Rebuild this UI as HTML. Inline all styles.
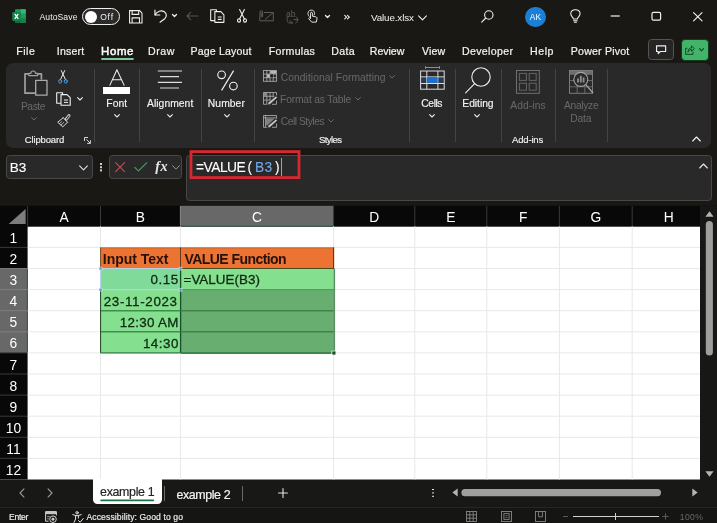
<!DOCTYPE html>
<html>
<head>
<meta charset="utf-8">
<title>Value.xlsx - Excel</title>
<style>
html,body{margin:0;padding:0;}
body{width:717px;height:523px;overflow:hidden;background:#1a1815;font-family:"Liberation Sans",sans-serif;color:#fff;position:relative;}
.a{position:absolute;}
.t{position:absolute;white-space:nowrap;line-height:1;transform-origin:0 50%;}
#root{position:absolute;left:0;top:0;width:717px;height:523px;will-change:transform;}
svg{position:absolute;overflow:visible;}
/* title */
#title{left:0;top:0;width:717px;height:36px;background:#1a1815;}
/* tabs */
.tab{font-size:10.6px;color:#f4f4f4;top:45px;-webkit-text-stroke:0.2px currentColor;}
/* ribbon */
#ribbon{left:6px;top:63px;width:705px;height:84.5px;background:#292929;border-radius:7px;}
.sep{position:absolute;width:1px;background:#444;top:69px;height:73px;}
.rl{font-size:10.3px;color:#f4f4f4;-webkit-text-stroke:0.15px currentColor;}
.gl{font-size:9.5px;color:#f2f2f2;top:134px;-webkit-text-stroke:0.15px currentColor;}
.dim{color:#696969;-webkit-text-stroke:0;}
/* formula bar */
#namebox{left:5.7px;top:155px;width:85.4px;height:21.7px;background:#292929;border:1px solid #484848;border-radius:3.5px;}
#fxbox{left:109.3px;top:155.2px;width:70.6px;height:21.4px;background:#292929;border:1px solid #484848;border-radius:3.5px;}
#fbar{left:185.5px;top:154.7px;width:524.5px;height:44.3px;background:#292929;border:1px solid #484848;border-radius:3.5px;}
/* grid */
.ch{position:absolute;top:206px;height:20px;color:#fff;font-size:13.8px;text-align:center;line-height:24px;}
.rh{position:absolute;left:0;width:26.8px;color:#fff;font-size:13.8px;text-align:center;line-height:1;}
.cell{position:absolute;-webkit-text-stroke:0.3px currentColor;font-size:13.4px;color:#1a1a1a;line-height:21px;white-space:nowrap;}
</style>
</head>
<body>
<div id="root">
<!-- TITLE BAR -->
<div class="a" id="title"></div>
<!--TITLE-CONTENT-->
<!-- excel logo -->
<svg style="left:12.3px;top:9.3px" width="14" height="14" viewBox="0 0 14 14">
 <rect x="3" y="0.3" width="10.8" height="13.5" rx="0.8" fill="#1f9a5c"/>
 <rect x="8.6" y="0.3" width="5.2" height="4.5" fill="#30b877"/>
 <rect x="8.6" y="4.8" width="5.2" height="4.5" fill="#1f9a5c"/>
 <rect x="8.6" y="9.3" width="5.2" height="4.5" fill="#14804a"/>
 <rect x="3" y="9.3" width="5.6" height="4.5" fill="#17653a"/>
 <rect x="0.2" y="2.9" width="8.6" height="9" rx="0.8" fill="#15804a"/>
 <path d="M2.7 4.9 L6.3 9.9 M6.3 4.9 L2.7 9.9" stroke="#fff" stroke-width="1.25" fill="none"/>
</svg>
<div class="t" id="t_autosave" style="left:39.46px;top:12.5px;font-size:8.6px;color:#f2f2f2;letter-spacing:0.1px">AutoSave</div>
<div class="a" style="left:81.5px;top:8px;width:36px;height:15px;border:1px solid #f0f0f0;border-radius:9px;background:#2b2b2b"></div>
<div class="a" style="left:84.5px;top:10.5px;width:12px;height:12px;border-radius:6px;background:#fff"></div>
<div class="t" id="t_off" style="left:100.17px;top:12.5px;font-size:8.6px;color:#f2f2f2;letter-spacing:0.78px">Off</div>
<!-- save -->
<svg style="left:129px;top:9.6px" width="13.6" height="13.6" viewBox="0 0 14 13" preserveAspectRatio="none" fill="none" stroke="#f0f0f0" stroke-width="1.1">
 <path d="M0.6 0.6 H11 L13.4 3 V12.4 H0.6 Z"/>
 <path d="M3.2 0.6 V4.2 H10 V0.6"/>
 <path d="M3.2 12.4 V7.6 H10.8 V12.4"/>
</svg>
<!-- undo -->
<svg style="left:153.6px;top:8.8px" width="13.6" height="14" viewBox="0 0 14 14" fill="none" stroke="#f0f0f0" stroke-width="1.2" stroke-linecap="round" stroke-linejoin="round">
 <path d="M1 1 V6 H6"/>
 <path d="M1.2 5.8 C3 2.2 7.5 0.6 10.6 2.6 C13.4 4.5 13.2 7.8 11 9.8 L6.2 13.4"/>
</svg>
<svg style="left:172px;top:14.4px" width="5" height="3.4" viewBox="0 0 6 4" fill="none" stroke="#f0f0f0" stroke-width="1.5" stroke-linecap="round" stroke-linejoin="round"><path d="M0.6 0.6 L3 3 L5.4 0.6"/></svg>
<!-- redo-ish left arrow (dim) -->
<svg style="left:186.2px;top:10.7px" width="13" height="10" viewBox="0 0 14 10" fill="none" stroke="#525252" stroke-width="1.2" stroke-linecap="round" stroke-linejoin="round"><path d="M13 5 H1 M5 1 L1 5 L5 9"/></svg>
<!-- copy -->
<svg style="left:210px;top:9.1px" width="14.6" height="14" viewBox="0 0 15 13" preserveAspectRatio="none" fill="none" stroke="#f0f0f0" stroke-width="1.1" stroke-linejoin="round">
 <path d="M5 10.8 H0.7 V0.7 H6.6 V2.4"/>
 <path d="M5 2.4 H11.2 L14.3 5.4 V12.4 H5 Z"/>
 <path d="M8 7.4 H12 M8 9.6 H12" stroke-width="1"/>
</svg>
<!-- scissors -->
<svg style="left:237px;top:9.4px" width="10" height="14" viewBox="0 0 10 14" fill="none" stroke="#f0f0f0" stroke-width="1.1" stroke-linecap="round">
 <path d="M2.6 0.6 L7.4 10 M7.4 0.6 L2.6 10"/>
 <ellipse cx="2" cy="11.4" rx="1.5" ry="1.7"/><ellipse cx="8" cy="11.4" rx="1.5" ry="1.7"/>
</svg>
<!-- dim mail -->
<svg style="left:259px;top:10px" width="15" height="12" viewBox="0 0 15 12" fill="none" stroke="#5c5c5c" stroke-width="1">
 <path d="M5 2.5 H14.3 V10.8 H0.7 V7"/>
 <path d="M14 2.8 L6 9.5"/>
 <path d="M1 7 V2 C1 0.2 3.6 0.2 3.6 2 V6.4 C3.6 7.4 2.2 7.4 2.2 6.4 V2.6"/>
</svg>
<!-- dim ab -->
<div class="t" style="left:286px;top:9.5px;font-size:8.5px;color:#5c5c5c">ab</div>
<svg style="left:286px;top:16px" width="13" height="8" viewBox="0 0 13 8" fill="none" stroke="#5c5c5c" stroke-width="1" stroke-linecap="round">
 <path d="M2.5 0.5 C0.5 2 0.5 5 2.5 6.8 M6.5 7 L3.8 4.6 M6.5 7 H3.4 M8 3.6 H12 M10 0.8 C12.5 2.4 12.2 5.6 9.8 7"/>
</svg>
<!-- touch -->
<svg style="left:307px;top:8.8px" width="11" height="14.4" viewBox="0 0 13 16" fill="none" stroke="#f0f0f0" stroke-width="1.1" stroke-linecap="round" stroke-linejoin="round">
 <path d="M2.4 8.2 C-0.2 5.6 1.2 0.8 5 0.8 C8.6 0.8 10 4.4 8.4 6.6"/>
 <path d="M4.2 10.4 V4.4 C4.2 3 6.4 3 6.4 4.4 V8 L10.4 8.8 C11.6 9 12 9.8 11.8 11 L11 15 H5.6 L2.2 11.2 C1.6 10.2 3 9.2 4.2 10.4"/>
</svg>
<svg style="left:325px;top:14.8px" width="5" height="3.4" viewBox="0 0 6 4" fill="none" stroke="#f0f0f0" stroke-width="1.5" stroke-linecap="round" stroke-linejoin="round"><path d="M0.6 0.6 L3 3 L5.4 0.6"/></svg>
<svg style="left:343.6px;top:14.9px" width="6.4" height="4.3" viewBox="0 0 7 5" fill="none" stroke="#f0f0f0" stroke-width="1.3" stroke-linecap="round" stroke-linejoin="round"><path d="M0.6 0.5 L2.8 2.5 L0.6 4.5 M3.8 0.5 L6 2.5 L3.8 4.5"/></svg>
<div class="t" id="t_fname" style="left:370.98px;top:12.95px;font-size:9.8px;color:#f2f2f2;letter-spacing:-0.11px">Value.xlsx</div>
<svg style="left:417.5px;top:14.5px" width="9" height="6" viewBox="0 0 9 6" fill="none" stroke="#f0f0f0" stroke-width="1.1" stroke-linecap="round" stroke-linejoin="round"><path d="M0.6 0.8 L4.5 4.8 L8.4 0.8"/></svg>
<!-- search -->
<svg style="left:480.8px;top:9.6px" width="13" height="13" viewBox="0 0 13 13" fill="none" stroke="#f0f0f0" stroke-width="1.1" stroke-linecap="round"><circle cx="7.8" cy="5" r="4.2"/><path d="M4.8 8 L0.7 12.2"/></svg>
<!-- avatar -->
<div class="a" style="left:525px;top:6.5px;width:20.5px;height:20.5px;border-radius:11px;background:#1b7fd6"></div>
<div class="t" id="t_ak" style="left:529.8px;top:13.4px;font-size:8.4px;color:#fff">AK</div>
<!-- bulb -->
<svg style="left:569.7px;top:8.9px" width="11.4" height="14.3" viewBox="0 0 12 15" fill="none" stroke="#f0f0f0" stroke-width="1.1" stroke-linecap="round" stroke-linejoin="round">
 <path d="M3.6 10.6 C3.4 8.6 0.8 7.6 0.8 5 C0.8 2.4 3 0.7 5.7 0.7 C8.4 0.7 10.6 2.4 10.6 5 C10.6 7.6 8 8.6 7.8 10.6 Z"/>
 <path d="M3.8 12.4 H7.6 M4.6 14 H6.8"/>
</svg>
<!-- window controls -->
<svg style="left:0;top:0" width="717" height="36" viewBox="0 0 717 36"><rect x="610.6" y="15.2" width="9.3" height="1.5" rx="0.6" fill="#c6c6c6"/><rect x="652" y="12.4" width="8.6" height="7.8" rx="1.4" fill="none" stroke="#f0f0f0" stroke-width="1.2"/></svg>
<svg style="left:692.8px;top:11.9px" width="9.6" height="9.4" viewBox="0 0 10 10" preserveAspectRatio="none" fill="none" stroke="#f0f0f0" stroke-width="1.2" stroke-linecap="round"><path d="M0.6 0.6 L9.4 9.4 M9.4 0.6 L0.6 9.4"/></svg>
<!--TITLE-END-->
<!--TABS-->
<!-- tabs -->
<div class="t tab" id="tb_file" style="top:45.8px;left:16.33px;letter-spacing:0.47px">File</div>
<div class="t tab" id="tb_insert" style="top:45.8px;left:56.72px;letter-spacing:0.22px">Insert</div>
<div class="t tab" id="tb_home" style="top:45.8px;left:100.78px;color:#fff;letter-spacing:0.59px;-webkit-text-stroke:0.45px #fff;transform:scaleX(1.08)">Home</div>
<svg style="left:0;top:0" width="200" height="70" viewBox="0 0 200 70"><rect x="101" y="57.9" width="32.9" height="2.1" rx="1" fill="#7cc79c"/></svg>
<div class="t tab" id="tb_draw" style="top:45.8px;left:148.12px;letter-spacing:0.52px">Draw</div>
<div class="t tab" id="tb_pl" style="top:45.8px;left:190.59px;letter-spacing:0.14px">Page Layout</div>
<div class="t tab" id="tb_formulas" style="top:45.8px;left:268.86px;letter-spacing:0.27px">Formulas</div>
<div class="t tab" id="tb_data" style="top:45.8px;left:331.29px;letter-spacing:0.29px">Data</div>
<div class="t tab" id="tb_review" style="top:45.8px;left:369.81px;letter-spacing:-0.03px">Review</div>
<div class="t tab" id="tb_view" style="top:45.8px;left:422px;letter-spacing:0.13px">View</div>
<div class="t tab" id="tb_dev" style="top:45.8px;left:461.92px;letter-spacing:0.36px">Developer</div>
<div class="t tab" id="tb_help" style="top:45.8px;left:530.12px;letter-spacing:0.53px">Help</div>
<div class="t tab" id="tb_pp" style="top:45.8px;left:570.81px;letter-spacing:0.19px">Power Pivot</div>
<!-- comments button -->
<div class="a" style="left:648.3px;top:39.1px;width:23.6px;height:18.8px;border:1px solid #545454;border-radius:3.5px;background:#252525"></div>
<svg style="left:655.8px;top:44.5px" width="10.2" height="10" viewBox="0 0 11 10" fill="none" stroke="#f0f0f0" stroke-width="1.25" stroke-linejoin="round"><path d="M0.6 0.6 H10.4 V6.6 H4.6 L2.4 8.8 V6.6 H0.6 Z"/></svg>
<!-- share button -->
<div class="a" style="left:680.5px;top:38.7px;width:26.2px;height:20.4px;border-radius:4px;background:#43b369;border:0.8px solid #0f3d20"></div>
<svg style="left:684.6px;top:45px" width="10" height="10" viewBox="0 0 11 11" fill="none" stroke="#0f4a24" stroke-width="1.1" stroke-linejoin="round" stroke-linecap="round">
 <path d="M2.2 3.6 H0.7 V10.3 H8.8 V7.8"/>
 <path d="M3.4 7.6 C3.4 4.6 5.2 3.2 7.2 3.1 V1 L10.3 4 L7.2 6.8 V5 C5.6 5 4.4 5.8 3.4 7.6 Z"/>
</svg>
<svg style="left:699px;top:48px" width="5" height="4" viewBox="0 0 5 4" fill="none" stroke="#0f4a24" stroke-width="1.1" stroke-linecap="round" stroke-linejoin="round"><path d="M0.5 0.6 L2.5 2.8 L4.5 0.6"/></svg>
<!--TABS-END-->
<!-- RIBBON -->
<div class="a" id="ribbon"></div>
<!--RIBBON-CONTENT-->
<!-- Clipboard group -->
<svg style="left:24px;top:70px" width="24" height="26" viewBox="0 0 24 26" fill="none" stroke="#a0a0a0" stroke-width="1.7" stroke-linejoin="round">
 <path d="M11 23.2 H1 V3.8 H5"/>
 <path d="M13.4 3.8 H17.4 V9.6"/>
 <path d="M4.8 5.6 V3.4 H6.8 C7 0.2 11.4 0.2 11.6 3.4 H13.6 V5.6 Z" stroke-width="1.2"/>
 <rect x="11.7" y="10.3" width="11.3" height="14.9" fill="#292929" stroke-width="1.3" stroke="#ababab"/>
</svg>
<div class="t rl dim" id="r_paste" style="left:20.96px;top:101.6px;letter-spacing:-0.46px">Paste</div>
<svg style="left:30.5px;top:117px" width="6" height="4" viewBox="0 0 6 4" fill="none" stroke="#6a6a6a" stroke-width="1" stroke-linecap="round" stroke-linejoin="round"><path d="M0.6 0.6 L3 3 L5.4 0.6"/></svg>
<!-- cut -->
<svg style="left:58px;top:69.5px" width="10" height="14" viewBox="0 0 10 14" fill="none" stroke-width="1" stroke-linecap="round">
 <path d="M3.3 0.6 L7.7 10 M6.7 0.6 L2.3 10" stroke="#ececec"/>
 <ellipse cx="2.2" cy="11.3" rx="1.5" ry="1.9" stroke="#4a9be0"/><ellipse cx="7.8" cy="11.3" rx="1.5" ry="1.9" stroke="#4a9be0"/>
</svg>
<!-- copy -->
<svg style="left:56px;top:91.5px" width="15" height="14" viewBox="0 0 15 14" fill="none" stroke="#f0f0f0" stroke-width="1.1" stroke-linejoin="round">
 <path d="M5 11.2 H0.7 V0.7 H6.6 V2.6"/>
 <path d="M5 2.6 H11 L14.2 5.6 V13.2 H5 Z"/>
 <path d="M8 8 H12 M8 10.4 H12" stroke-width="1"/>
</svg>
<svg style="left:76.5px;top:96.5px" width="6" height="4" viewBox="0 0 6 4" fill="none" stroke="#e8e8e8" stroke-width="1.1" stroke-linecap="round" stroke-linejoin="round"><path d="M0.6 0.6 L3 3 L5.4 0.6"/></svg>
<!-- format painter -->
<svg style="left:57px;top:113.5px" width="14" height="14" viewBox="0 0 14 14" fill="none" stroke="#dedede" stroke-width="0.95" stroke-linejoin="round" stroke-linecap="round">
 <path d="M9.2 5.2 L12 1.6" stroke-width="3"/><path d="M9.4 5 L11.9 1.8" stroke="#292929" stroke-width="1.2"/>
 <path d="M6.2 3.6 L10.6 8.4"/>
 <path d="M6.2 3.8 L0.7 8.2 L5.8 12.8 L10.4 8.4"/>
 <path d="M2.6 9.6 L4.6 7.6 M4 11 L6.6 8.6" stroke-width="0.75"/>
</svg>
<div class="t gl" id="g_clip" style="top:135.37px;left:24.84px;letter-spacing:-0.16px">Clipboard</div>
<svg style="left:83.5px;top:136.5px" width="7" height="7" viewBox="0 0 7 7" fill="none" stroke="#e8e8e8" stroke-width="0.9"><path d="M0.5 4 V0.5 H4"/><path d="M2.4 2.4 L6.2 6.2 M6.4 3.2 V6.4 H3.2"/></svg>
<div class="sep" style="left:93.5px"></div>
<!-- Font group -->
<svg style="left:109px;top:68.5px" width="16" height="17" viewBox="0 0 16 17" fill="none" stroke="#f0f0f0" stroke-width="1.05" stroke-linejoin="round"><path d="M0.7 16.6 L7.9 0.8 L15.3 16.6 M3.4 10.8 H12.6"/></svg>
<div class="a" style="left:103px;top:87.2px;width:27.2px;height:6.6px;background:#fff"></div>
<div class="t rl" id="r_font" style="left:106.34px;top:98.87px;letter-spacing:0.02px">Font</div>
<svg style="left:113.5px;top:114px" width="6" height="4" viewBox="0 0 6 4" fill="none" stroke="#e8e8e8" stroke-width="1.1" stroke-linecap="round" stroke-linejoin="round"><path d="M0.6 0.6 L3 3 L5.4 0.6"/></svg>
<div class="sep" style="left:139px"></div>
<!-- Alignment -->
<svg style="left:157px;top:70px" width="26" height="19" viewBox="0 0 26 19" fill="none" stroke="#dcdcdc" stroke-width="1.1"><path d="M0.8 1 H25 M3 6.6 H22 M0.8 12.4 H25 M3 18 H22"/></svg>
<div class="t rl" id="r_align" style="left:147px;top:98.98px;letter-spacing:0.06px">Alignment</div>
<svg style="left:166.5px;top:114px" width="6" height="4" viewBox="0 0 6 4" fill="none" stroke="#e8e8e8" stroke-width="1.1" stroke-linecap="round" stroke-linejoin="round"><path d="M0.6 0.6 L3 3 L5.4 0.6"/></svg>
<div class="sep" style="left:201px"></div>
<!-- Number -->
<svg style="left:216.5px;top:69.5px" width="21" height="21" viewBox="0 0 21 21" fill="none" stroke="#f0f0f0" stroke-width="1.15"><circle cx="4.6" cy="4.8" r="3.8"/><circle cx="16.4" cy="16" r="3.8"/><path d="M16.6 0.6 L4.6 20.4"/></svg>
<div class="t rl" id="r_number" style="left:207.8px;top:98.83px;letter-spacing:0.09px">Number</div>
<svg style="left:223.5px;top:114px" width="6" height="4" viewBox="0 0 6 4" fill="none" stroke="#e8e8e8" stroke-width="1.1" stroke-linecap="round" stroke-linejoin="round"><path d="M0.6 0.6 L3 3 L5.4 0.6"/></svg>
<div class="sep" style="left:253.5px"></div>
<!-- Styles group -->
<svg style="left:263px;top:70.3px" width="14" height="12" viewBox="0 0 14 12" fill="none" stroke="#a6a6a6" stroke-width="0.9">
 <rect x="0.5" y="0.5" width="13" height="10.8"/><path d="M0.5 4.1 H13.5 M0.5 7.7 H13.5 M3.8 0.5 V11.3 M7 0.5 V11.3 M10.2 0.5 V11.3"/>
 <rect x="7.3" y="0.9" width="5.8" height="2.8" fill="#b8b8b8" stroke="none"/><rect x="4" y="4.3" width="3" height="3.2" fill="#b8b8b8" stroke="none"/><rect x="7.3" y="4.4" width="2.8" height="3" fill="#1e1e1e" stroke="none"/>
</svg>
<div class="t rl dim" id="r_cf" style="left:280.72px;top:72.95px;letter-spacing:0.06px">Conditional Formatting</div>
<svg style="left:388.5px;top:74.5px" width="6" height="4" viewBox="0 0 6 4" fill="none" stroke="#6a6a6a" stroke-width="1" stroke-linecap="round" stroke-linejoin="round"><path d="M0.6 0.6 L3 3 L5.4 0.6"/></svg>
<svg style="left:263px;top:92.3px" width="15" height="13" viewBox="0 0 15 13" fill="none" stroke="#a6a6a6" stroke-width="0.9">
 <path d="M0.5 12.3 V0.5 H13.5 V3.4 M0.5 4.3 H11.4 M0.5 8.1 H7.4 M3.8 0.5 V12.3 M7 0.5 V9 M10.2 0.5 V5.6 M0.5 12.3 H3.8 M9 12.3 H13.5 V8.6"/>
 <rect x="0.9" y="0.9" width="2.6" height="3" fill="#8a8a8a" stroke="none"/>
 <path d="M12.9 4.2 L14.3 5.6 L7 12.2 L4.6 12.8 L5.4 10.6 Z" fill="#d0d0d0" stroke="#2a2a2a" stroke-width="0.5"/>
</svg>
<div class="t rl dim" id="r_ft" style="left:280.06px;top:95.33px;letter-spacing:-0.18px">Format as Table</div>
<svg style="left:354.5px;top:96.5px" width="6" height="4" viewBox="0 0 6 4" fill="none" stroke="#6a6a6a" stroke-width="1" stroke-linecap="round" stroke-linejoin="round"><path d="M0.6 0.6 L3 3 L5.4 0.6"/></svg>
<svg style="left:263px;top:114.6px" width="15" height="13" viewBox="0 0 15 13" fill="none" stroke="#a6a6a6" stroke-width="0.9">
 <path d="M0.5 12.3 V0.5 H13.5 V3.4 M0.5 2.9 H13.5 M2.6 0.5 V12.3 M0.5 12.3 H3.8 M9 12.3 H13.5 V8.6"/>
 <path d="M3 3.4 H11.6 L4.6 10.2 L3 10.2 Z" fill="#808080" stroke="none"/>
 <path d="M12.9 4.2 L14.3 5.6 L7 12.2 L4.6 12.8 L5.4 10.6 Z" fill="#d0d0d0" stroke="#2a2a2a" stroke-width="0.5"/>
</svg>
<div class="t rl dim" id="r_cs" style="left:280.72px;top:117.07px;letter-spacing:-0.48px">Cell Styles</div>
<svg style="left:327.5px;top:119px" width="6" height="4" viewBox="0 0 6 4" fill="none" stroke="#6a6a6a" stroke-width="1" stroke-linecap="round" stroke-linejoin="round"><path d="M0.6 0.6 L3 3 L5.4 0.6"/></svg>
<div class="t gl" id="g_styles" style="top:135.17px;left:318.91px;letter-spacing:-0.56px">Styles</div>
<div class="sep" style="left:409px"></div>
<!-- Cells -->
<svg style="left:419.5px;top:66.3px" width="25" height="24" viewBox="0 0 25 24" fill="none" stroke="#dcdcdc" stroke-width="1">
 <path d="M5.5 1.5 H19.5 M5.5 0.2 V2.8 M19.5 0.2 V2.8" stroke="#5f9bd0"/>
 <rect x="0.6" y="5" width="23.6" height="18.2"/>
 <path d="M0.6 10.9 H24.2 M0.6 17.5 H24.2 M6.8 5 V23.2 M17.9 5 V23.2"/>
 <rect x="7.3" y="11.4" width="10.1" height="5.6" fill="#1b6fd2" stroke="none"/>
 <rect x="1.1" y="11.4" width="5.2" height="5.6" fill="#1b6fd2" opacity="0.25" stroke="none"/>
 <rect x="18.4" y="11.4" width="5.3" height="5.6" fill="#1b6fd2" opacity="0.25" stroke="none"/>
</svg>
<div class="t rl" id="r_cells" style="left:421.33px;top:99px;letter-spacing:-0.43px">Cells</div>
<svg style="left:428.5px;top:114px" width="6" height="4" viewBox="0 0 6 4" fill="none" stroke="#e8e8e8" stroke-width="1.1" stroke-linecap="round" stroke-linejoin="round"><path d="M0.6 0.6 L3 3 L5.4 0.6"/></svg>
<div class="sep" style="left:455px"></div>
<!-- Editing -->
<svg style="left:465px;top:67px" width="26" height="27" viewBox="0 0 26 27" fill="none" stroke="#ececec" stroke-width="1.1" stroke-linecap="round"><circle cx="16" cy="10" r="9.2"/><path d="M9.4 16.8 L0.6 25.8"/></svg>
<div class="t rl" id="r_editing" style="left:462.33px;top:99.01px;letter-spacing:-0.04px">Editing</div>
<svg style="left:474px;top:114px" width="6" height="4" viewBox="0 0 6 4" fill="none" stroke="#e8e8e8" stroke-width="1.1" stroke-linecap="round" stroke-linejoin="round"><path d="M0.6 0.6 L3 3 L5.4 0.6"/></svg>
<div class="sep" style="left:501px"></div>
<!-- Add-ins -->
<svg style="left:516.2px;top:70px" width="24" height="24" viewBox="0 0 24 24" fill="none" stroke="#646464" stroke-width="1">
 <rect x="0.5" y="0.5" width="22.8" height="22.8" stroke="#707070"/><rect x="3.4" y="3.4" width="7" height="7"/><rect x="13.2" y="3.4" width="7" height="7"/><rect x="3.4" y="13.2" width="7" height="7"/><rect x="13.2" y="13.2" width="7" height="7"/>
</svg>
<div class="t rl dim" id="r_addins" style="left:510.29px;top:101.04px;letter-spacing:0.08px">Add-ins</div>
<div class="t gl" id="g_addins" style="top:135.37px;left:512px;letter-spacing:-0.17px">Add-ins</div>
<div class="sep" style="left:554.5px"></div>
<!-- Analyze Data -->
<svg style="left:569px;top:70px" width="25" height="24" viewBox="0 0 25 24" fill="none" stroke="#7c7c7c" stroke-width="1">
 <rect x="0.5" y="0.5" width="23" height="22.8"/>
 <rect x="1" y="1" width="22" height="3" fill="#6e6e6e" stroke="none"/>
 <path d="M0.5 4.4 H23.5 M0.5 10.6 H23.5 M0.5 16.8 H23.5 M8.2 4.4 V23.3 M15.8 4.4 V23.3" stroke="#6a6a6a"/>
 <circle cx="11.8" cy="9.4" r="7" fill="#2b2b2b" stroke="#a4a4a4" stroke-width="1.1"/>
 <path d="M9 12.4 V8.6 M11.8 12.4 V5.8 M14.6 12.4 V7.6" stroke="#909090" stroke-width="1.8"/>
 <path d="M16.8 14.6 L24 23" stroke="#a4a4a4" stroke-width="1.3"/>
</svg>
<div class="t rl dim" id="r_analyze" style="left:563.92px;top:100.68px;letter-spacing:-0.31px">Analyze</div>
<div class="t rl dim" id="r_data" style="left:570.2px;top:113.89px;letter-spacing:-0.13px">Data</div>
<div class="sep" style="left:606.5px"></div>
<svg style="left:691.5px;top:136px" width="9" height="6" viewBox="0 0 9 6" fill="none" stroke="#f0f0f0" stroke-width="1.1" stroke-linecap="round" stroke-linejoin="round"><path d="M0.7 5 L4.5 1 L8.3 5"/></svg>
<!--RIBBON-END-->

<!--FORMULA-->
<!-- formula bar -->
<div class="a" id="namebox"></div>
<div class="t" id="f_name" style="-webkit-text-stroke:0.1px currentColor;left:9.81px;top:160.99px;font-size:13.6px;color:#fff;letter-spacing:-0.04px">B3</div>
<svg style="left:79px;top:164.5px" width="9" height="6" viewBox="0 0 9 6" fill="none" stroke="#e0e0e0" stroke-width="1.1" stroke-linecap="round" stroke-linejoin="round"><path d="M0.6 0.8 L4.5 4.8 L8.4 0.8"/></svg>
<div class="a" style="left:100.3px;top:163px;width:1.6px;height:1.6px;background:#d0d0d0;box-shadow:0 3.2px 0 #d0d0d0,0 6.4px 0 #d0d0d0"></div>
<div class="a" id="fxbox"></div>
<svg style="left:114.8px;top:161.6px" width="10.4" height="10.4" viewBox="0 0 10 10" fill="none" stroke="#cc4a55" stroke-width="1.1" stroke-linecap="round"><path d="M0.6 0.6 L9.2 9.2 M9.2 0.6 L0.6 9.2"/></svg>
<svg style="left:133.8px;top:161.6px" width="13.6" height="9.8" viewBox="0 0 14 10" fill="none" stroke="#4a9e68" stroke-width="1.1" stroke-linecap="round" stroke-linejoin="round"><path d="M0.7 5.4 L4.6 9.2 L13.2 0.7"/></svg>
<div class="t" id="f_fx" style="left:155.28px;top:159px;font-size:14.2px;font-family:'Liberation Serif',serif;font-style:italic;font-weight:bold;color:#e8e8e8;letter-spacing:0.45px">fx</div>
<svg style="left:171.8px;top:164.8px" width="8" height="5.2" viewBox="0 0 9 6" fill="none" stroke="#a4a4a4" stroke-width="1" stroke-linecap="round" stroke-linejoin="round"><path d="M0.6 0.8 L4.5 4.8 L8.4 0.8"/></svg>
<div class="a" id="fbar"></div>
<div class="t" id="f_1" style="-webkit-text-stroke:0.1px currentColor;left:195.92px;top:161.04px;font-size:13.8px;color:#fff;letter-spacing:-0.48px">=VALUE</div>
<div class="t" id="f_2" style="-webkit-text-stroke:0.1px currentColor;left:247.52px;top:161px;font-size:13.8px;color:#fff">(</div>
<div class="t" id="f_3" style="-webkit-text-stroke:0.1px currentColor;left:255.02px;top:161.04px;font-size:13.8px;color:#6fa8e6;letter-spacing:0.4px">B3</div>
<div class="t" id="f_4" style="-webkit-text-stroke:0.1px currentColor;left:275px;top:161px;font-size:13.8px;color:#fff">)</div>
<div class="a" style="left:281px;top:157.5px;width:1px;height:18.3px;background:#a4a4a4"></div>
<svg style="left:0;top:0" width="717" height="200" viewBox="0 0 717 200"><rect x="191" y="151.6" width="108" height="26" fill="none" stroke="#d72832" stroke-width="2.8"/></svg>
<svg style="left:698.5px;top:162.5px" width="9" height="6" viewBox="0 0 9 6" fill="none" stroke="#e8e8e8" stroke-width="1.1" stroke-linecap="round" stroke-linejoin="round"><path d="M0.7 5 L4.5 1 L8.3 5"/></svg>
<!--FORMULA-END-->
<!-- GRID -->
<svg style="left:0;top:0" width="717" height="523" viewBox="0 0 717 523">
<rect x="0" y="206" width="700.3" height="273.5" fill="#fff"/>
<rect x="0" y="205.8" width="717" height="20.9" fill="#080808"/>
<rect x="0" y="206" width="27.6" height="273.5" fill="#080808"/>
<rect x="180.4" y="205.8" width="153.2" height="20.9" fill="#686868"/><line x1="180.4" y1="226.2" x2="333.6" y2="226.2" stroke="#2f5a44" stroke-width="1"/>
<rect x="0" y="268.5" width="27.6" height="84.4" fill="#686868"/><line x1="27.3" y1="268.5" x2="27.3" y2="352.9" stroke="#2f5a44" stroke-width="1"/>
<path d="M25.6 209 L25.6 224 L8.6 224 Z" fill="#7d7d7d"/>
<line x1="27.6" y1="206" x2="27.6" y2="226.3" stroke="#3a3a3a" stroke-width="1"/>
<line x1="100.5" y1="206" x2="100.5" y2="226.3" stroke="#3a3a3a" stroke-width="1"/>
<line x1="180.4" y1="206" x2="180.4" y2="225.4" stroke="#8a8a8a" stroke-width="1"/>
<line x1="333.6" y1="206" x2="333.6" y2="226.3" stroke="#3a3a3a" stroke-width="1"/>
<line x1="414.8" y1="206" x2="414.8" y2="226.3" stroke="#3a3a3a" stroke-width="1"/>
<line x1="486.8" y1="206" x2="486.8" y2="226.3" stroke="#3a3a3a" stroke-width="1"/>
<line x1="559.4" y1="206" x2="559.4" y2="226.3" stroke="#3a3a3a" stroke-width="1"/>
<line x1="632.2" y1="206" x2="632.2" y2="226.3" stroke="#3a3a3a" stroke-width="1"/>
<line x1="0" y1="247.4" x2="27.6" y2="247.4" stroke="#3a3a3a" stroke-width="1"/>
<line x1="0" y1="268.5" x2="26.8" y2="268.5" stroke="#7a7a7a" stroke-width="1"/>
<line x1="0" y1="289.6" x2="26.8" y2="289.6" stroke="#7e7e7e" stroke-width="1"/>
<line x1="0" y1="310.7" x2="26.8" y2="310.7" stroke="#7e7e7e" stroke-width="1"/>
<line x1="0" y1="331.8" x2="26.8" y2="331.8" stroke="#7e7e7e" stroke-width="1"/>
<line x1="0" y1="352.9" x2="27.6" y2="352.9" stroke="#3a3a3a" stroke-width="1"/>
<line x1="0" y1="374.0" x2="27.6" y2="374.0" stroke="#3a3a3a" stroke-width="1"/>
<line x1="0" y1="395.1" x2="27.6" y2="395.1" stroke="#3a3a3a" stroke-width="1"/>
<line x1="0" y1="416.2" x2="27.6" y2="416.2" stroke="#3a3a3a" stroke-width="1"/>
<line x1="0" y1="437.3" x2="27.6" y2="437.3" stroke="#3a3a3a" stroke-width="1"/>
<line x1="0" y1="458.4" x2="27.6" y2="458.4" stroke="#3a3a3a" stroke-width="1"/>
<line x1="100.5" y1="226.3" x2="100.5" y2="479.5" stroke="#e8e8e8" stroke-width="1"/>
<line x1="180.4" y1="226.3" x2="180.4" y2="479.5" stroke="#e8e8e8" stroke-width="1"/>
<line x1="333.6" y1="226.3" x2="333.6" y2="479.5" stroke="#e8e8e8" stroke-width="1"/>
<line x1="414.8" y1="226.3" x2="414.8" y2="479.5" stroke="#e8e8e8" stroke-width="1"/>
<line x1="486.8" y1="226.3" x2="486.8" y2="479.5" stroke="#e8e8e8" stroke-width="1"/>
<line x1="559.4" y1="226.3" x2="559.4" y2="479.5" stroke="#e8e8e8" stroke-width="1"/>
<line x1="632.2" y1="226.3" x2="632.2" y2="479.5" stroke="#e8e8e8" stroke-width="1"/>
<line x1="27.6" y1="247.4" x2="700.3" y2="247.4" stroke="#e8e8e8" stroke-width="1"/>
<line x1="27.6" y1="268.5" x2="700.3" y2="268.5" stroke="#e8e8e8" stroke-width="1"/>
<line x1="27.6" y1="289.6" x2="700.3" y2="289.6" stroke="#e8e8e8" stroke-width="1"/>
<line x1="27.6" y1="310.7" x2="700.3" y2="310.7" stroke="#e8e8e8" stroke-width="1"/>
<line x1="27.6" y1="331.8" x2="700.3" y2="331.8" stroke="#e8e8e8" stroke-width="1"/>
<line x1="27.6" y1="352.9" x2="700.3" y2="352.9" stroke="#e8e8e8" stroke-width="1"/>
<line x1="27.6" y1="374.0" x2="700.3" y2="374.0" stroke="#e8e8e8" stroke-width="1"/>
<line x1="27.6" y1="395.1" x2="700.3" y2="395.1" stroke="#e8e8e8" stroke-width="1"/>
<line x1="27.6" y1="416.2" x2="700.3" y2="416.2" stroke="#e8e8e8" stroke-width="1"/>
<line x1="27.6" y1="437.3" x2="700.3" y2="437.3" stroke="#e8e8e8" stroke-width="1"/>
<line x1="27.6" y1="458.4" x2="700.3" y2="458.4" stroke="#e8e8e8" stroke-width="1"/>
<rect x="100.5" y="247.8" width="233.6" height="21.1" fill="#ec7331"/>
<rect x="100.5" y="268.8" width="233.9" height="84.4" fill="#84df8e"/>
<rect x="101" y="269.0" width="79" height="20.6" fill="#80db9a"/>
<rect x="180.9" y="289.6" width="153.4" height="63.6" fill="#67ae70"/>
<line x1="100.5" y1="247.8" x2="334" y2="247.8" stroke="#a8582a" stroke-width="1" opacity="0.8"/>
<line x1="181" y1="268.5" x2="334" y2="268.5" stroke="#4a4a1e" stroke-width="1"/>
<line x1="333.6" y1="247.4" x2="333.6" y2="268.5" stroke="#5a2e10" stroke-width="1"/>
<rect x="100.6" y="268.6" width="79.9" height="21.1" fill="none" stroke="#b4d6ee" stroke-width="1"/>
<line x1="100.6" y1="247.4" x2="100.6" y2="268.5" stroke="#7a4a22" stroke-width="1"/>
<line x1="100.6" y1="289.6" x2="100.6" y2="352.9" stroke="#1f3f22" stroke-width="1"/>
<line x1="180.5" y1="247.4" x2="180.5" y2="268.5" stroke="#6a3a18" stroke-width="1"/>
<line x1="180.6" y1="268.5" x2="180.6" y2="352.9" stroke="#17502b" stroke-width="1.3"/>
<line x1="101" y1="310.7" x2="180.5" y2="310.7" stroke="#3f8f4c" stroke-width="1.4"/>
<line x1="101" y1="331.8" x2="180.5" y2="331.8" stroke="#3f8f4c" stroke-width="1.4"/>
<line x1="100.5" y1="352.9" x2="180.5" y2="352.9" stroke="#3a7f46" stroke-width="1.2"/>
<line x1="181" y1="289.6" x2="334" y2="289.6" stroke="#4f9a5a" stroke-width="1"/>
<line x1="181" y1="310.7" x2="333.5" y2="310.7" stroke="#3f8449" stroke-width="1.5"/>
<line x1="181" y1="331.8" x2="333.5" y2="331.8" stroke="#3f8449" stroke-width="1.5"/>
<line x1="334.4" y1="268.5" x2="334.4" y2="351.4" stroke="#5d8d66" stroke-width="1.4"/>
<line x1="181" y1="353.2" x2="331.5" y2="353.2" stroke="#1d5c33" stroke-width="1.2"/>
<rect x="331.6" y="350.7" width="4" height="4" fill="#fff"/>
<rect x="332.3" y="351.4" width="3.2" height="3.2" fill="#1a4a2e"/>
<rect x="98.8" y="266.8" width="3.6" height="3.6" fill="#e8f2fa" opacity="0.8"/><rect x="99.4" y="267.4" width="2.4" height="2.4" fill="#5b9bd5"/>
<rect x="178.7" y="266.8" width="3.6" height="3.6" fill="#e8f2fa" opacity="0.8"/><rect x="179.3" y="267.4" width="2.4" height="2.4" fill="#5b9bd5"/>
<rect x="98.8" y="287.9" width="3.6" height="3.6" fill="#e8f2fa" opacity="0.8"/><rect x="99.4" y="288.5" width="2.4" height="2.4" fill="#5b9bd5"/>
<rect x="178.7" y="287.9" width="3.6" height="3.6" fill="#e8f2fa" opacity="0.8"/><rect x="179.3" y="288.5" width="2.4" height="2.4" fill="#5b9bd5"/>
</svg>
<div class="ch" style="left:27.6px;width:72.9px">A</div>
<div class="ch" style="left:100.5px;width:79.9px">B</div>
<div class="ch" style="left:180.4px;width:153.2px">C</div>
<div class="ch" style="left:333.6px;width:81.2px">D</div>
<div class="ch" style="left:414.8px;width:72.0px">E</div>
<div class="ch" style="left:486.8px;width:72.6px">F</div>
<div class="ch" style="left:559.4px;width:72.8px">G</div>
<div class="ch" style="left:632.2px;width:73.2px">H</div>
<div class="rh" style="top:232.2px">1</div>
<div class="rh" style="top:253.25px">2</div>
<div class="rh" style="top:274.3px">3</div>
<div class="rh" style="top:295.35px">4</div>
<div class="rh" style="top:316.4px">5</div>
<div class="rh" style="top:337.45px">6</div>
<div class="rh" style="top:358.5px">7</div>
<div class="rh" style="top:379.55px">8</div>
<div class="rh" style="top:400.6px">9</div>
<div class="rh" style="top:421.65px">10</div>
<div class="rh" style="top:442.7px">11</div>
<div class="rh" style="top:463.75px">12</div>
<!-- cell text -->
<div class="cell" id="c_b2" style="-webkit-text-stroke:0;left:102.83px;top:248.6px;font-size:14px;font-weight:bold;color:#28110a;letter-spacing:-0.02px">Input Text</div>
<div class="cell" id="c_c2" style="-webkit-text-stroke:0;left:184.42px;top:249.2px;font-size:14px;font-weight:bold;color:#28110a;letter-spacing:-0.55px">VALUE Function</div>
<div class="cell" id="c_b3" style="left:150.61px;top:269.35px;color:#0f2a14;letter-spacing:0.53px">0.15</div>
<div class="cell" id="c_c3" style="left:183.52px;top:269.05px;color:#0f2a14;letter-spacing:0.04px">=VALUE(B3)</div>
<div class="cell" id="c_b4" style="left:103.7px;top:291.35px;color:#0f2a14;letter-spacing:0.65px">23-11-2023</div>
<div class="cell" id="c_b5" style="left:119.86px;top:311.65px;color:#0f2a14;letter-spacing:0.28px">12:30 AM</div>
<div class="cell" id="c_b6" style="left:142.89px;top:333.39px;color:#0f2a14;letter-spacing:0.5px">14:30</div>

<!--GRIDEND-->
<!--BOTTOM-->
<!-- vertical scrollbar -->
<div class="a" style="left:700.3px;top:206px;width:17px;height:274px;background:#171716"></div>
<svg style="left:705px;top:210.5px" width="9" height="6" viewBox="0 0 9 6"><path d="M4.5 0.3 L8.6 5.8 H0.4 Z" fill="#b4b4b4"/></svg>
<svg style="left:0;top:0" width="717" height="523" viewBox="0 0 717 523"><rect x="705.8" y="221" width="7.1" height="134.6" rx="3.5" fill="#9e9e9e"/></svg>
<svg style="left:705px;top:471px" width="9" height="6" viewBox="0 0 9 6"><path d="M4.5 5.7 L8.6 0.2 H0.4 Z" fill="#b4b4b4"/></svg>
<!-- sheet tab bar -->
<div class="a" style="left:0;top:479.6px;width:717px;height:28px;background:#181816"></div>
<svg style="left:19px;top:488px" width="6" height="10" viewBox="0 0 6 10" fill="none" stroke="#9a9a9a" stroke-width="1.1" stroke-linecap="round" stroke-linejoin="round"><path d="M5 0.8 L1 5 L5 9.2"/></svg>
<svg style="left:46.5px;top:488px" width="6" height="10" viewBox="0 0 6 10" fill="none" stroke="#9a9a9a" stroke-width="1.1" stroke-linecap="round" stroke-linejoin="round"><path d="M1 0.8 L5 5 L1 9.2"/></svg>
<div class="a" style="left:93.2px;top:479px;width:68.4px;height:24.8px;background:#fff;border-radius:0 0 4.5px 4.5px"></div>
<div class="t" id="s_ex1" style="left:100.1px;top:485.68px;font-size:12.4px;color:#252525;letter-spacing:-0.33px;-webkit-text-stroke:0.2px currentColor">example 1</div>
<svg style="left:0;top:0" width="200" height="523" viewBox="0 0 200 523"><rect x="100.3" y="499.5" width="53.8" height="1.7" rx="0.8" fill="#1f7246"/></svg>
<div class="a" style="left:164.4px;top:485.5px;width:1px;height:15.5px;background:#6a6a6a"></div>
<div class="t" id="s_ex2" style="left:176.5px;top:489.04px;font-size:12.4px;color:#f4f4f4;letter-spacing:-0.39px;-webkit-text-stroke:0.2px currentColor">example 2</div>
<div class="a" style="left:242px;top:485.5px;width:1px;height:15.5px;background:#6a6a6a"></div>
<svg style="left:277.5px;top:487.5px" width="10" height="10" viewBox="0 0 10 10" fill="none" stroke="#e4e4e4" stroke-width="1.1" stroke-linecap="round"><path d="M5 0.6 V9.4 M0.6 5 H9.4"/></svg>
<div class="a" style="left:432px;top:488.6px;width:1.8px;height:1.8px;background:#e4e4e4;box-shadow:0 3.4px 0 #e4e4e4,0 6.8px 0 #e4e4e4"></div>
<!-- horizontal scrollbar -->
<svg style="left:451.5px;top:488px" width="6" height="9" viewBox="0 0 6 9"><path d="M0.3 4.5 L5.7 0.4 V8.6 Z" fill="#b4b4b4"/></svg>
<svg style="left:691.5px;top:488px" width="6" height="9" viewBox="0 0 6 9"><path d="M5.7 4.5 L0.3 0.4 V8.6 Z" fill="#b4b4b4"/></svg>
<svg style="left:0;top:0" width="717" height="523" viewBox="0 0 717 523"><rect x="461.4" y="489" width="199.6" height="7.3" rx="3.6" fill="#a0a0a0"/></svg>
<!-- status bar -->
<div class="a" style="left:0;top:506.6px;width:717px;height:17px;background:#151514;border-top:1px solid #262624"></div>
<div class="t" id="st_enter" style="-webkit-text-stroke:0.15px currentColor;left:8.96px;top:513.2px;font-size:8.6px;color:#f0f0f0;letter-spacing:-0.27px">Enter</div>
<svg style="left:45.2px;top:511.3px" width="13" height="12" viewBox="0 0 13 12" fill="none" stroke="#d4d4d4" stroke-width="1"><path d="M0.6 10.2 V0.6 H11.4 V4.4 M0.6 10.2 H3.6"/><rect x="1" y="1" width="10" height="2.2" fill="#c4c4c4" stroke="none"/><circle cx="8" cy="8.2" r="3.3"/><circle cx="8" cy="8.2" r="1.1" fill="#d4d4d4"/><path d="M2.2 5.6 H4.6 M2.2 7.8 H3.8" stroke-width="0.8"/></svg>
<svg style="left:71.5px;top:510.5px" width="12" height="12" viewBox="0 0 12 12" fill="none" stroke="#e4e4e4" stroke-width="1" stroke-linecap="round" stroke-linejoin="round"><circle cx="5" cy="1.8" r="1.2"/><path d="M0.8 3.6 L3.6 4.6 H6.4 L9.2 3.6 M3.6 4.6 V8 L2 11.4 M6.4 4.6 V7"/><path d="M6.6 9.6 L8.2 11.2 L11.2 7.6"/></svg>
<div class="t" id="st_acc" style="-webkit-text-stroke:0.15px currentColor;left:86.49px;top:513.2px;font-size:8.6px;color:#f0f0f0;letter-spacing:0.1px">Accessibility: Good to go</div>
<svg style="left:466px;top:511px" width="11" height="11" viewBox="0 0 11 11" fill="none" stroke="#868686" stroke-width="0.9"><rect x="0.5" y="0.5" width="10" height="10"/><path d="M0.5 3.8 H10.5 M0.5 7.2 H10.5 M3.8 0.5 V10.5 M7.2 0.5 V10.5"/></svg>
<svg style="left:500.5px;top:511px" width="11" height="11" viewBox="0 0 11 11" fill="none" stroke="#868686" stroke-width="0.9"><rect x="0.5" y="0.5" width="10" height="10"/><rect x="2.9" y="2.6" width="5.2" height="5.8"/><path d="M4.2 4.6 H6.8 M4.2 6.4 H6.8" stroke-width="0.6"/></svg>
<svg style="left:534.5px;top:511px" width="11" height="11" viewBox="0 0 11 11" fill="none" stroke="#868686" stroke-width="0.9"><rect x="0.5" y="0.5" width="10" height="10"/><path d="M3.6 0.5 V5.8 H7.4 V0.5"/></svg>
<div class="a" style="left:563px;top:516px;width:5px;height:1px;background:#5a5a5a"></div>
<div class="a" style="left:573.3px;top:516px;width:86px;height:1px;background:#d0d0d0"></div>
<div class="a" style="left:615.3px;top:513px;width:1.2px;height:7px;background:#d0d0d0"></div>
<svg style="left:662px;top:513px" width="7" height="7" viewBox="0 0 7 7" fill="none" stroke="#5a5a5a" stroke-width="1"><path d="M3.5 0.4 V6.6 M0.4 3.5 H6.6"/></svg>
<div class="t" id="st_zoom" style="left:679.75px;top:513.2px;font-size:8.6px;color:#6a6a6a;letter-spacing:0.38px">100%</div>
<!--BOTTOM-END-->
</div>
</body>
</html>
